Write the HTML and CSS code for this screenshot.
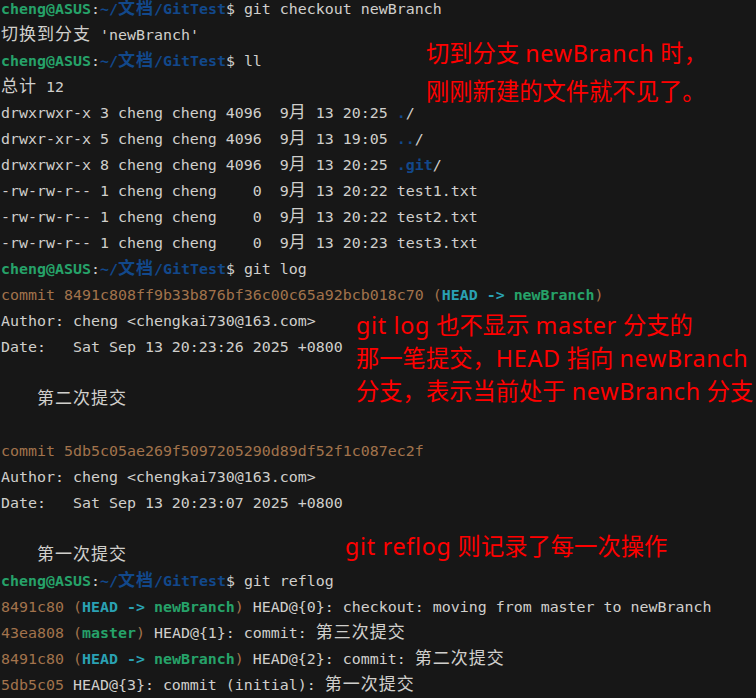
FILE: index.html
```html
<!DOCTYPE html>
<html lang="zh">
<head>
<meta charset="utf-8">
<link rel="stylesheet" href="styles.css">
</head>
<body>
<div class="screen">
  <div class="term">
    <div class="ln"><span class="g">cheng@ASUS</span>:<span class="bl">~/<span class="w">文档</span>/GitTest</span>$ git checkout newBranch</div>
    <div class="ln"><span class="w">切换到分支</span> 'newBranch'</div>
    <div class="ln"><span class="g">cheng@ASUS</span>:<span class="bl">~/<span class="w">文档</span>/GitTest</span>$ ll</div>
    <div class="ln"><span class="w">总计</span> 12</div>
    <div class="ln">drwxrwxr-x 3 cheng cheng 4096  9<span class="w">月</span> 13 20:25 <span class="bl">.</span>/</div>
    <div class="ln">drwxr-xr-x 5 cheng cheng 4096  9<span class="w">月</span> 13 19:05 <span class="bl">..</span>/</div>
    <div class="ln">drwxrwxr-x 8 cheng cheng 4096  9<span class="w">月</span> 13 20:25 <span class="bl">.git</span>/</div>
    <div class="ln">-rw-rw-r-- 1 cheng cheng    0  9<span class="w">月</span> 13 20:22 test1.txt</div>
    <div class="ln">-rw-rw-r-- 1 cheng cheng    0  9<span class="w">月</span> 13 20:22 test2.txt</div>
    <div class="ln">-rw-rw-r-- 1 cheng cheng    0  9<span class="w">月</span> 13 20:23 test3.txt</div>
    <div class="ln"><span class="g">cheng@ASUS</span>:<span class="bl">~/<span class="w">文档</span>/GitTest</span>$ git log</div>
    <div class="ln"><span class="y">commit 8491c808ff9b33b876bf36c00c65a92bcb018c70 (</span><span class="c">HEAD -&gt; </span><span class="g">newBranch</span><span class="y">)</span></div>
    <div class="ln">Author: cheng &lt;chengkai730@163.com&gt;</div>
    <div class="ln">Date:   Sat Sep 13 20:23:26 2025 +0800</div>
    <div class="ln"> </div>
    <div class="ln">    <span class="w">第二次提交</span></div>
    <div class="ln"> </div>
    <div class="ln"><span class="y">commit 5db5c05ae269f5097205290d89df52f1c087ec2f</span></div>
    <div class="ln">Author: cheng &lt;chengkai730@163.com&gt;</div>
    <div class="ln">Date:   Sat Sep 13 20:23:07 2025 +0800</div>
    <div class="ln"> </div>
    <div class="ln">    <span class="w">第一次提交</span></div>
    <div class="ln"><span class="g">cheng@ASUS</span>:<span class="bl">~/<span class="w">文档</span>/GitTest</span>$ git reflog</div>
    <div class="ln"><span class="y">8491c80 (</span><span class="c">HEAD -&gt; </span><span class="g">newBranch</span><span class="y">)</span> HEAD@{0}: checkout: moving from master to newBranch</div>
    <div class="ln"><span class="y">43ea808 (</span><span class="g">master</span><span class="y">)</span> HEAD@{1}: commit: <span class="w">第三次提交</span></div>
    <div class="ln"><span class="y">8491c80 (</span><span class="c">HEAD -&gt; </span><span class="g">newBranch</span><span class="y">)</span> HEAD@{2}: commit: <span class="w">第二次提交</span></div>
    <div class="ln"><span class="y">5db5c05</span> HEAD@{3}: commit (initial): <span class="w">第一次提交</span></div>
  </div>

  <div class="note note-1">
    <div>切到分支 <span class="lat">newBranch</span> 时，</div>
    <div>刚刚新建的文件就不见了。</div>
  </div>
  <div class="note note-2">
    <div><span class="lat">git log</span> 也不显示 <span class="lat">master</span> 分支的</div>
    <div>那一笔提交，<span class="lat">HEAD</span> 指向 <span class="lat">newBranch</span></div>
    <div>分支，表示当前处于 <span class="lat">newBranch</span> 分支</div>
  </div>
  <div class="note note-3">
    <div><span class="lat">git reflog</span> 则记录了每一次操作</div>
  </div>
</div>
</body>
</html>
```

FILE: styles.css
```css
html, body {
  margin: 0;
  padding: 0;
  background: #171717;
}

.screen {
  position: relative;
  width: 756px;
  height: 698px;
  overflow: hidden;
  background: #171717;
}

.term {
  margin-top: -4px;
  padding-left: 1px;
  font-family: "DejaVu Sans Mono", "Liberation Mono", monospace;
  font-size: 14.95px;
  line-height: 26px;
  color: #d0cfcc;
}

.ln {
  height: 26px;
  white-space: pre;
}

.w {
  font-family: "Noto Sans CJK SC", sans-serif;
  font-size: 17px;
  letter-spacing: 1px;
  line-height: 1;
}

.g {
  color: #26a269;
  font-weight: bold;
}

.bl {
  color: #12488b;
  font-weight: bold;
}

.y {
  color: #a2734c;
}

.c {
  color: #2aa1b3;
  font-weight: bold;
}

.note {
  position: absolute;
  color: #f00;
  font-family: "Noto Sans", "Noto Sans CJK SC", sans-serif;
  font-size: 23.3px;
  white-space: nowrap;
}

.lat {
  letter-spacing: 0.7px;
}

.note-1 {
  left: 426px;
  top: 34px;
  line-height: 38px;
}

.note-2 {
  left: 356px;
  top: 309px;
  line-height: 33px;
}

.note-3 {
  left: 345px;
  top: 529px;
  line-height: 34px;
}
```
